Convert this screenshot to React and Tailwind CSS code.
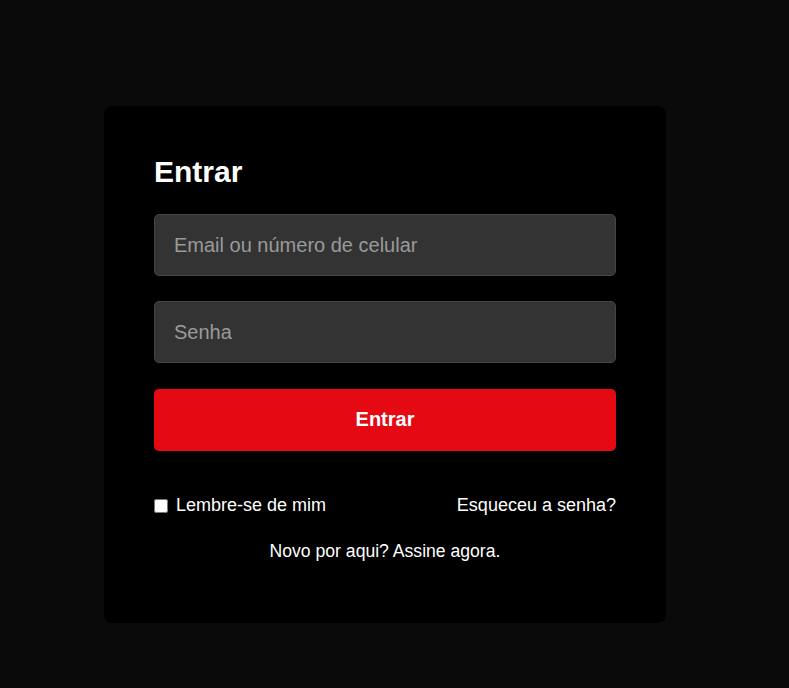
export default function App() {
  return (
    <div
      className="min-h-[688px] w-full bg-[#0a0a0a] pl-[104px] pt-[106px]"
      style={{ fontFamily: '"Liberation Sans", Arial, sans-serif' }}
    >
      <div className="w-[562px] h-[517px] rounded-[8px] bg-black px-[50px] pt-[49px]">
        <h1 className="text-[30px] font-bold leading-[34px] text-white">Entrar</h1>
        <input
          type="text"
          placeholder="Email ou número de celular"
          className="mt-[25px] block h-[62px] w-[462px] rounded-[5px] border border-[#454545] bg-[#333333] px-[19px] text-[20px] text-white outline-none placeholder:text-[#9a9a9a]"
        />
        <input
          type="password"
          placeholder="Senha"
          className="mt-[25px] block h-[62px] w-[462px] rounded-[5px] border border-[#454545] bg-[#333333] px-[19px] text-[20px] text-white outline-none placeholder:text-[#9a9a9a]"
        />
        <button className="mt-[26px] flex h-[62px] w-[462px] items-center justify-center rounded-[5px] bg-[#e50914] pb-[2px] text-[20px] font-bold text-white">
          Entrar
        </button>
        <div className="mt-[44px] flex w-[462px] items-center justify-between text-[18px] leading-[21px] text-white">
          <label className="flex items-center gap-[8px]">
            <input type="checkbox" className="h-[14px] w-[14px]" />
            <span>Lembre-se de mim</span>
          </label>
          <span>Esqueceu a senha?</span>
        </div>
        <p className="mt-[25px] w-[462px] text-center text-[17.6px] leading-[20px] text-white">
          Novo por aqui? Assine agora.
        </p>
      </div>
    </div>
  );
}
